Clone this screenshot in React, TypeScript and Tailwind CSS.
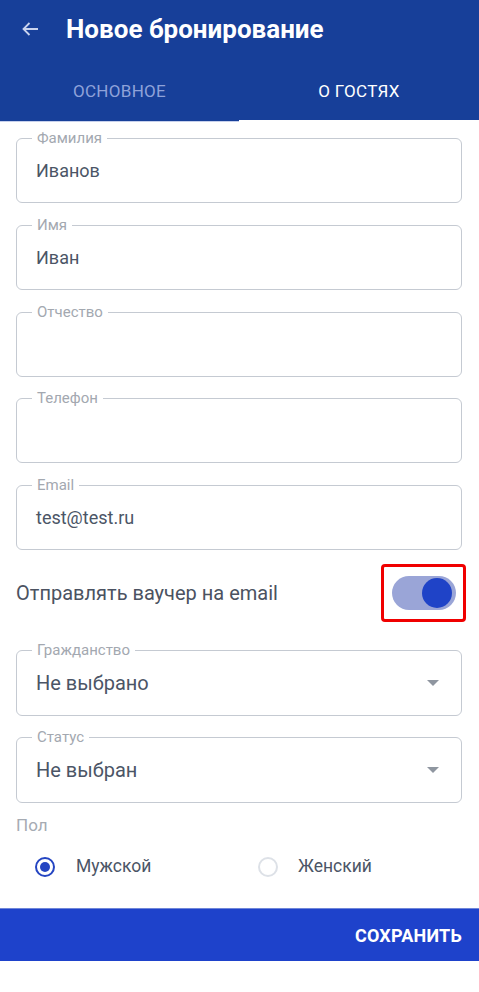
import React from "react";

function Field({ label, value }: { label: string; value?: string }) {
  return (
    <div className="relative h-[65px] rounded-[6px] border border-[#c5cad2] flex items-center px-[19px]">
      <span className="absolute left-[15px] -top-[11px] bg-white px-[5px] text-[15px] leading-[20px] text-[#a3a8b0]">
        {label}
      </span>
      {value && <span className="text-[18px] text-[#4b5566]">{value}</span>}
    </div>
  );
}

function Select({ label, value }: { label: string; value: string }) {
  return (
    <div className="relative h-[66px] rounded-[6px] border border-[#c5cad2] flex items-center justify-between pl-[19px] pr-[22px]">
      <span className="absolute left-[15px] -top-[11px] bg-white px-[5px] text-[15px] leading-[20px] text-[#a3a8b0]">
        {label}
      </span>
      <span className="text-[20px] text-[#4b5566]">{value}</span>
      <svg width="12" height="6" viewBox="0 0 12 6">
        <path d="M0 0 L12 0 L6 6 Z" fill="#8f96a0" />
      </svg>
    </div>
  );
}

export default function App() {
  return (
    <div className="w-[479px] h-[992px] bg-white flex flex-col" style={{ fontFamily: "Roboto, 'Noto Sans', sans-serif" }}>
      <div className="bg-[#173f99] h-[122px] flex flex-col">
        <div className="h-[58px] flex items-center pl-[22px]">
          <svg width="17" height="14" viewBox="0 0 17 14" fill="none" stroke="#c9d3ee" strokeWidth="1.8">
            <path d="M16 7 H2 M7.5 1 L1.5 7 L7.5 13" />
          </svg>
          <span className="ml-[27px] text-[26px] font-bold text-white">Новое бронирование</span>
        </div>
        <div className="flex flex-1">
          <div className="flex-1 flex flex-col">
            <div className="flex-1 flex items-center justify-center pt-[6px] text-[17px] text-[#8fa2d9] tracking-[0.3px]">ОСНОВНОЕ</div>
            <div className="h-[2px] bg-[#173f99] border-b border-[#c6d0ec]"></div>
          </div>
          <div className="w-[240px] flex flex-col">
            <div className="flex-1 flex items-center justify-center pt-[6px] text-[17px] text-white tracking-[0.3px]">О ГОСТЯХ</div>
            <div className="h-[2px] bg-white"></div>
          </div>
        </div>
      </div>

      <div className="flex flex-col px-[16px] pt-[16px] flex-1">
        <div className="flex flex-col gap-[21.75px] pr-[1px]">
          <Field label="Фамилия" value="Иванов" />
          <Field label="Имя" value="Иван" />
          <Field label="Отчество" />
          <Field label="Телефон" />
          <Field label="Email" value="test@test.ru" />
        </div>

        <div className="h-[100px] flex items-start justify-between pt-[14px]">
          <span className="text-[20px] leading-[58px] text-[#4b5261]">Отправлять ваучер на email</span>
          <div className="relative w-[85px] h-[58px] mr-[-3px] rounded-[4px] border-[3px] border-[#f00000] flex items-center justify-center">
            <div className="w-[64px] h-[34px] rounded-full bg-[#9aa5d7] flex items-center justify-end pr-[4px]">
              <div className="w-[30px] h-[30px] rounded-full bg-[#1f43c7]"></div>
            </div>
          </div>
        </div>

        <div className="flex flex-col gap-[21px] pr-[1px]">
          <Select label="Гражданство" value="Не выбрано" />
          <Select label="Статус" value="Не выбран" />
        </div>

        <div className="mt-[10px] text-[17px] text-[#a6abb3]">Пол</div>
        <div className="flex items-center h-[56px]">
          <div className="w-[242px] flex items-center pl-[19px]">
            <div className="w-[20px] h-[20px] rounded-full border-[2px] border-[#2445c2] flex items-center justify-center">
              <div className="w-[10px] h-[10px] rounded-full bg-[#2445c2]"></div>
            </div>
            <span className="ml-[21px] text-[17.5px] text-[#4b5566]">Мужской</span>
          </div>
          <div className="flex items-center">
            <div className="w-[20px] h-[20px] rounded-full border-[2px] border-[#dde1e7]"></div>
            <span className="ml-[20px] text-[17.5px] text-[#4b5566]">Женский</span>
          </div>
        </div>
      </div>

      <div className="h-[53px] bg-[#1e42cb] border-t border-[#6f86d9] flex items-center justify-end pr-[17px]">
        <span className="text-[18px] font-bold text-white tracking-[0.2px]">СОХРАНИТЬ</span>
      </div>
      <div className="h-[31px] bg-white"></div>
    </div>
  );
}
